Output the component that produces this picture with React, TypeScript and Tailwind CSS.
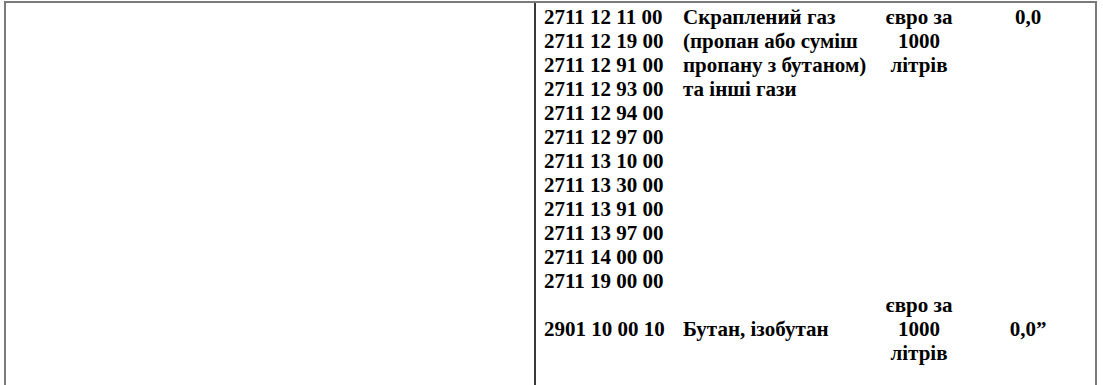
import React from "react";

const codes = [
  "2711 12 11 00",
  "2711 12 19 00",
  "2711 12 91 00",
  "2711 12 93 00",
  "2711 12 94 00",
  "2711 12 97 00",
  "2711 13 10 00",
  "2711 13 30 00",
  "2711 13 91 00",
  "2711 13 97 00",
  "2711 14 00 00",
  "2711 19 00 00",
];

export default function App() {
  return (
    <div className="w-[1103px] h-[385px] bg-white overflow-hidden pt-px pl-[4px]">
      <div className="flex w-[1093px] h-[390px] border-l-2 border-t-2 border-r-2 border-[#7a7a7a] text-black font-bold text-[21px] leading-[24px] font-['Liberation_Serif','Times_New_Roman',serif]">
        <div className="w-[530px] shrink-0 border-r-2 border-[#3a3a3a]" />
        <div className="flex-1 pt-[2px]">
          <div className="grid grid-cols-[139px_200px_88px_1fr]">
            <div className="pl-[8px] whitespace-nowrap">
              {codes.map((c) => (
                <div key={c}>{c}</div>
              ))}
            </div>
            <div className="pl-[8px] whitespace-nowrap">
              <div>Скраплений газ</div>
              <div>(пропан або суміш</div>
              <div>пропану з бутаном)</div>
              <div>та інші гази</div>
            </div>
            <div className="text-center whitespace-nowrap">
              <div>євро за</div>
              <div>1000</div>
              <div>літрів</div>
            </div>
            <div className="text-center pr-[2px]">0,0</div>

            <div className="pl-[8px] whitespace-nowrap flex items-center">2901 10 00 10</div>
            <div className="pl-[8px] whitespace-nowrap flex items-center">Бутан, ізобутан</div>
            <div className="text-center whitespace-nowrap">
              <div>євро за</div>
              <div>1000</div>
              <div>літрів</div>
            </div>
            <div className="text-center flex items-center justify-center pr-[2px]">0,0”</div>
          </div>
        </div>
      </div>
    </div>
  );
}
